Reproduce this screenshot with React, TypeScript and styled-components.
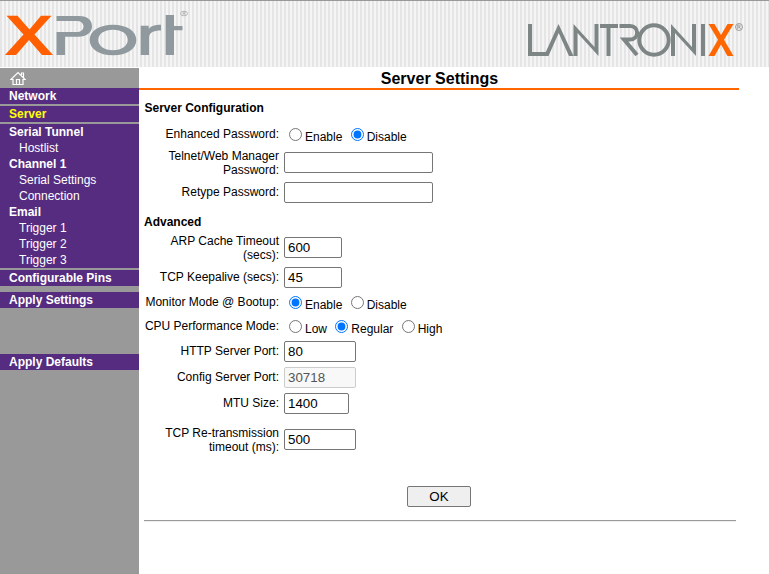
import React from "react";
import styled, { createGlobalStyle, css } from "styled-components";

const Global = createGlobalStyle`
  html, body { margin: 0; padding: 0; background: #fff; }
  body { font-family: "Liberation Sans", Arial, sans-serif; font-size: 12px; color: #000; overflow: hidden; }
  * { box-sizing: border-box; }
`;

const Page = styled.div`
  width: 769px;
  height: 574px;
  display: flex;
  flex-direction: column;
`;

const Header = styled.header`
  height: 68px;
  flex: none;
  display: flex;
  justify-content: space-between;
  border-top: 1px solid #999;
  border-bottom: 1px solid #fff;
  background: repeating-linear-gradient(to right, #e5e5e5 0 2px, #f5f5f5 2px 4px);
`;

const Body = styled.div`
  flex: 1;
  display: flex;
`;

const Sidebar = styled.nav`
  width: 139px;
  flex: none;
  background: #999;
`;

const HomeRow = styled.div`
  height: 20px;
  padding: 3px 0 0 10px;
  svg { display: block; }
`;

const NavGroup = styled.div<{ $gap?: number }>`
  background: #552c80;
  margin-bottom: ${(p) => p.$gap ?? 2}px;
`;

const NavItem = styled.a<{ $sub?: boolean; $active?: boolean }>`
  display: block;
  height: 16px;
  line-height: 16px;
  white-space: nowrap;
  color: ${(p) => (p.$active ? "#ff0" : "#fff")};
  font-weight: ${(p) => (p.$sub ? 400 : 700)};
  padding-left: ${(p) => (p.$sub ? 19 : 9)}px;
`;

const Main = styled.main`
  width: 600px;
`;

const Title = styled.h1`
  margin: 0;
  height: 22px;
  padding-left: 1px;
  border-bottom: 2px solid #f60;
  font-size: 16px;
  line-height: 21px;
  text-align: center;
`;

const Section = styled.h2<{ $height: number; $top: number; $left: number }>`
  margin: 0;
  height: ${(p) => p.$height}px;
  padding: ${(p) => p.$top}px 0 0 ${(p) => p.$left}px;
  font-size: 12px;
  line-height: 14px;
`;

const Row = styled.div<{ $height: number; $labelPad: number }>`
  height: ${(p) => p.$height}px;
  display: grid;
  grid-template-columns: 140px 1fr;
  column-gap: 5px;
  align-items: start;
  > :first-child { margin-top: ${(p) => p.$labelPad}px; }
`;

const Label = styled.div`
  text-align: right;
  line-height: 14px;
  white-space: pre;
`;

const Input = styled.input<{ $width: number }>`
  display: block;
  width: ${(p) => p.$width}px;
  height: 21px;
  padding: 1px 3px;
  border: 1px solid #767676;
  border-radius: 2px;
  background: #fff;
  color: #000;
  font: 13.333px "Liberation Sans", Arial, sans-serif;
  outline: 0;
  ${(p) =>
    p.disabled &&
    css`
      border-color: #ccc;
      background: #f8f8f8;
      color: #545454;
    `}
`;

const Radios = styled.div`
  display: flex;
  padding-left: 5px;
  gap: 8.3px;
`;

const Choice = styled.label`
  display: flex;
  gap: 3px;
  line-height: 14px;
  input { width: 13px; height: 13px; margin: 0; }
  span { padding-top: 2px; }
`;

const Actions = styled.div`
  height: 62px;
  padding: 28px 0 0 268px;
`;

const Button = styled.button`
  display: block;
  width: 64px;
  height: 21px;
  padding: 0;
  border: 1px solid #767676;
  border-radius: 2px;
  background: #efefef;
  font: 13.333px "Liberation Sans", Arial, sans-serif;
  color: #000;
`;

const Rule = styled.hr`
  width: 592px;
  height: 2px;
  margin: 0 0 0 5px;
  border: 0;
  border-top: 1px solid #9a9a9a;
  border-bottom: 1px solid #eee;
`;

const XPortLogo = () => (
  <svg width="200" height="66" viewBox="0 1 200 66" role="img" aria-label="XPort">
    <path fill="#ff5f00" d="M6.500 15.700H17.500L29.500 29.500L41 15.700H51.500L34.500 34.500L53 55H42L29 40L16 55H5L23.500 34.500Z" />
    <g fill="#8f999e">
      <path d="M56.500 16H79C88 16 92 20.500 92 26.300C92 32.500 87 36.700 78 36.700H65V55H56.500V32H76C81 32 83.500 30 83.500 26.500C83.500 23 81 21 76 21H56.500Z" />
      <path fillRule="evenodd" d="M113 24.700C127 24.700 136.300 31 136.300 40S127 55.300 113 55.300S89.700 49 89.700 40S99 24.700 113 24.700ZM113 29.800C104 29.800 98.300 34 98.300 40S104 50.200 113 50.200S127.700 46 127.700 40S122 29.800 113 29.800Z" />
      <path d="M140.700 55V25.700H148.700V29C151 26 155 24.800 161 24.800V30.500C153 30.500 149 32.500 149 38V55Z" />
      <path d="M165.700 15H174V26H182.500V30.300H174V55H165.700Z" />
    </g>
    <ellipse cx="184" cy="13.500" rx="3.500" ry="2.300" fill="none" stroke="#aaa" strokeWidth=".8" />
    <path d="M183 15V12.300H185V13.700H183M184.300 13.700L185.500 15" fill="none" stroke="#aaa" strokeWidth=".6" />
  </svg>
);

const LantronixLogo = () => (
  <svg width="249" height="66" viewBox="520 1 249 66" role="img" aria-label="Lantronix">
    <g fill="none" stroke="#7d8585" strokeWidth="4">
      <path d="M530 24V54H546" />
      <path d="M600 26H618M608.500 25.800V56" />
      <path d="M619.500 26H630C639.500 26 639.500 39.500 630 39.500H624L637 55" />
      <circle cx="654" cy="40" r="14.700" />
      <path d="M703 24V56" />
    </g>
    <g fill="#7d8585">
      <path d="M544 56L558.500 24L573.500 56H569L558.700 33L548.500 56Z" />
      <path d="M573.500 56V24L594.500 47V24H598.500V56L577.500 33V56Z" />
      <path d="M671 56V24L692 47V24H696V56L675 33V56Z" />
    </g>
    <path fill="#f60" d="M708.500 24H714.500L721 35L727.500 24H733.500L724 39.700L733.500 56H727.500L721 44.500L714.500 56H708.500L718 39.700Z" />
    <circle cx="739" cy="27" r="3.500" fill="none" stroke="#888" strokeWidth=".8" />
    <path d="M737.800 29V25H739.300Q741.200 26 739.300 27H737.800M739.200 27L740.600 29" fill="none" stroke="#888" strokeWidth=".7" />
  </svg>
);

const HomeIcon = () => (
  <svg width="16" height="15" viewBox="0 0 16 15" fill="none" stroke="#fff" strokeWidth="1.200">
    <path d="M3 8.500H.8L8 1.500L15.200 8.500H13V13.500H3ZM11.500 4V2H13.500V6.500M6.500 13.500V8.500H9.500V13.500" />
  </svg>
);

type Option = [label: string, checked: boolean];

const RadioField = ({ name, options }: { name: string; options: Option[] }) => (
  <Radios>
    {options.map(([label, checked]) => (
      <Choice key={label}>
        <input type="radio" name={name} defaultChecked={checked} />
        <span>{label}</span>
      </Choice>
    ))}
  </Radios>
);

export default function App() {
  return (
    <Page>
      <Global />
      <Header>
        <XPortLogo />
        <LantronixLogo />
      </Header>
      <Body>
        <Sidebar>
          <HomeRow><HomeIcon /></HomeRow>
          <NavGroup><NavItem>Network</NavItem></NavGroup>
          <NavGroup><NavItem $active>Server</NavItem></NavGroup>
          <NavGroup>
            <NavItem>Serial Tunnel</NavItem>
            <NavItem $sub>Hostlist</NavItem>
            <NavItem>Channel 1</NavItem>
            <NavItem $sub>Serial Settings</NavItem>
            <NavItem $sub>Connection</NavItem>
            <NavItem>Email</NavItem>
            <NavItem $sub>Trigger 1</NavItem>
            <NavItem $sub>Trigger 2</NavItem>
            <NavItem $sub>Trigger 3</NavItem>
          </NavGroup>
          <NavGroup $gap={6}><NavItem>Configurable Pins</NavItem></NavGroup>
          <NavGroup $gap={46}><NavItem>Apply Settings</NavItem></NavGroup>
          <NavGroup><NavItem>Apply Defaults</NavItem></NavGroup>
        </Sidebar>
        <Main>
          <Title>Server Settings</Title>
          <Section $height={38} $top={11} $left={5.5}>Server Configuration</Section>
          <Row $height={24} $labelPad={-1}>
            <Label>Enhanced Password:</Label>
            <RadioField name="enhanced" options={[["Enable", false], ["Disable", true]]} />
          </Row>
          <Row $height={30} $labelPad={-3}>
            <Label>{"Telnet/Web Manager\nPassword:"}</Label>
            <Input $width={149} type="password" />
          </Row>
          <Row $height={33} $labelPad={3}>
            <Label>Retype Password:</Label>
            <Input $width={149} type="password" />
          </Row>
          <Section $height={22} $top={0} $left={5}>Advanced</Section>
          <Row $height={30} $labelPad={-3}>
            <Label>{"ARP Cache Timeout\n(secs):"}</Label>
            <Input $width={58} defaultValue="600" />
          </Row>
          <Row $height={29} $labelPad={3}>
            <Label>TCP Keepalive (secs):</Label>
            <Input $width={58} defaultValue="45" />
          </Row>
          <Row $height={24} $labelPad={-1}>
            <Label>Monitor Mode @ Bootup:</Label>
            <RadioField name="monitor" options={[["Enable", true], ["Disable", false]]} />
          </Row>
          <Row $height={21} $labelPad={-1}>
            <Label>CPU Performance Mode:</Label>
            <RadioField name="cpu" options={[["Low", false], ["Regular", true], ["High", false]]} />
          </Row>
          <Row $height={26} $labelPad={3}>
            <Label>HTTP Server Port:</Label>
            <Input $width={72} defaultValue="80" />
          </Row>
          <Row $height={26} $labelPad={3}>
            <Label>Config Server Port:</Label>
            <Input $width={72} defaultValue="30718" disabled />
          </Row>
          <Row $height={36} $labelPad={3}>
            <Label>MTU Size:</Label>
            <Input $width={65} defaultValue="1400" />
          </Row>
          <Row $height={29} $labelPad={-3}>
            <Label>{"TCP Re-transmission\ntimeout (ms):"}</Label>
            <Input $width={72} defaultValue="500" />
          </Row>
          <Actions><Button>OK</Button></Actions>
          <Rule />
        </Main>
      </Body>
    </Page>
  );
}
